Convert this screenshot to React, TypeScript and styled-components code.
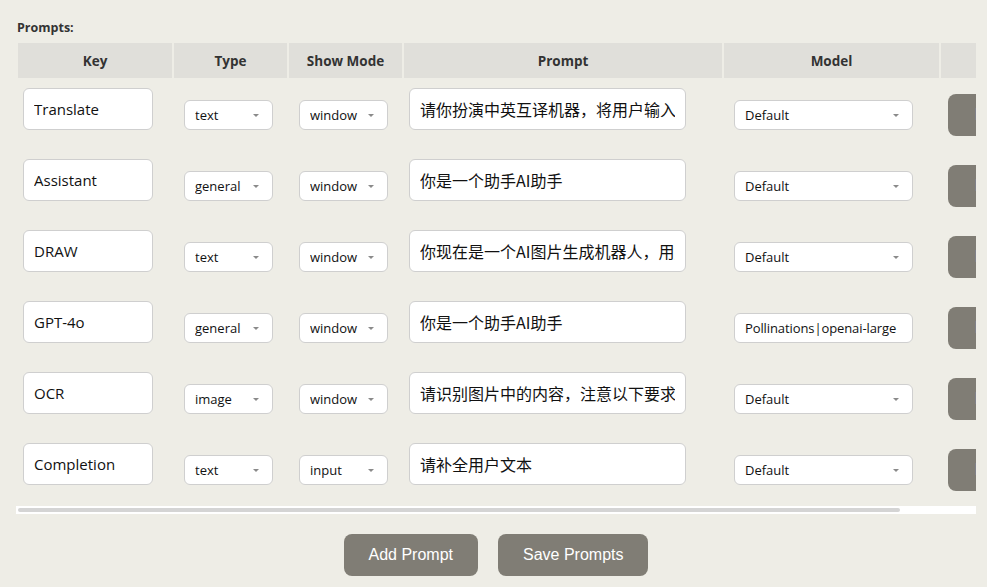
import React from "react";
import styled, { createGlobalStyle } from "styled-components";

const GlobalStyle = createGlobalStyle`
  html, body {
    margin: 0;
    padding: 0;
    background: #eeede6;
  }
  body {
    font-family: "Open Sans", "Noto Sans", sans-serif;
    color: #222;
  }
`;

const VIEW_W = 960;
const TABLE_W = 1040;

const Page = styled.div`
  width: ${VIEW_W}px;
  padding: 19px 11px 0 16px;
`;

const Label = styled.div`
  font-family: "Open Sans", sans-serif;
  font-weight: 700;
  font-size: 12.5px;
  line-height: 18px;
  color: #333;
  margin: 0 0 4px 1px;
`;

const Scroller = styled.div`
  width: ${VIEW_W}px;
  overflow-x: auto;
  overflow-y: hidden;
  scrollbar-width: none;
  &::-webkit-scrollbar {
    display: none;
  }
`;

const ScrollTrack = styled.div`
  width: ${VIEW_W}px;
  height: 8px;
  box-sizing: border-box;
  padding: 2px;
  background: #ffffff;
`;

const ScrollThumb = styled.div`
  height: 4px;
  border-radius: 2px;
  background: #d4d4d4;
`;

const Table = styled.table`
  width: ${TABLE_W}px;
  table-layout: fixed;
  border-collapse: separate;
  border-spacing: 2px;
`;

const Th = styled.th<{ $w: number }>`
  width: ${(p) => p.$w}px;
  height: 35px;
  padding: 0;
  background: #e0dfda;
  font-family: "Open Sans", sans-serif;
  font-weight: 700;
  font-size: 13.5px;
  color: #333;
  text-align: center;
`;

const Td = styled.td`
  padding: 8px 5px;
  vertical-align: middle;
`;

const TextInput = styled.input<{ $w: number; $cjk?: boolean }>`
  display: block;
  box-sizing: border-box;
  width: ${(p) => p.$w}px;
  height: 42px;
  margin: 0 0 11px 0;
  padding: 0 10px;
  border: 1px solid #cfcfcf;
  border-radius: 6px;
  background: #fff;
  color: #111;
  font-family: ${(p) =>
    p.$cjk
      ? `"Noto Sans CJK SC", "Noto Sans", sans-serif`
      : `"Open Sans", "Noto Sans", sans-serif`};
  font-size: ${(p) => (p.$cjk ? 16 : 15)}px;
  outline: none;
`;

const SelectWrap = styled.div<{ $w: number }>`
  position: relative;
  width: ${(p) => p.$w}px;
  margin-left: 5px;
  &::after {
    content: "";
    position: absolute;
    right: 14px;
    top: 14px;
    border-left: 3px solid transparent;
    border-right: 3px solid transparent;
    border-top: 3px solid #8a8a8a;
    pointer-events: none;
  }
`;

const Select = styled.select`
  display: block;
  box-sizing: border-box;
  width: 100%;
  height: 30px;
  padding: 0 20px 0 10px;
  border: 1px solid #cfcfcf;
  border-radius: 6px;
  background: #fff;
  color: #111;
  font-family: "Open Sans", sans-serif;
  font-size: 13px;
  appearance: none;
  -webkit-appearance: none;
  outline: none;
`;

const ModelInput = styled.input`
  display: block;
  box-sizing: border-box;
  width: 179px;
  height: 30px;
  margin-left: 5px;
  padding: 0 10px;
  border: 1px solid #cfcfcf;
  border-radius: 6px;
  background: #fff;
  color: #111;
  font-family: "Open Sans", sans-serif;
  font-size: 13px;
  letter-spacing: -0.1px;
  outline: none;
`;

const Button = styled.button<{ $inRow?: boolean }>`
  display: block;
  box-sizing: border-box;
  height: 42px;
  padding: 0 25px 0 ${(p) => (p.$inRow ? 27 : 25)}px;
  margin-left: ${(p) => (p.$inRow ? 2 : 0)}px;
  border: none;
  border-radius: 8px;
  background: #807d75;
  color: #fff;
  font-family: "Liberation Sans", Arial, sans-serif;
  font-size: 16px;
  cursor: pointer;
`;

const Actions = styled.div`
  display: flex;
  justify-content: center;
  gap: 20px;
  margin-top: 20px;
`;

type Row = {
  key: string;
  type: string;
  mode: string;
  prompt: string;
  model: string;
  modelIsText?: boolean;
};

const rows: Row[] = [
  { key: "Translate", type: "text", mode: "window", prompt: "请你扮演中英互译机器，将用户输入的内容翻译", model: "Default" },
  { key: "Assistant", type: "general", mode: "window", prompt: "你是一个助手AI助手", model: "Default" },
  { key: "DRAW", type: "text", mode: "window", prompt: "你现在是一个AI图片生成机器人，用户输入", model: "Default" },
  { key: "GPT-4o", type: "general", mode: "window", prompt: "你是一个助手AI助手", model: "Pollinations|openai-large", modelIsText: true },
  { key: "OCR", type: "image", mode: "window", prompt: "请识别图片中的内容，注意以下要求", model: "Default" },
  { key: "Completion", type: "text", mode: "input", prompt: "请补全用户文本", model: "Default" },
];

const columns: [string, number][] = [
  ["Key", 154],
  ["Type", 113],
  ["Show Mode", 113],
  ["Prompt", 318],
  ["Model", 215],
  ["", 113],
];

export default function App() {
  const thumbWidth = Math.round((VIEW_W / TABLE_W) * (VIEW_W - 4));
  return (
    <>
      <GlobalStyle />
      <Page>
        <Label>Prompts:</Label>
        <Scroller>
          <Table>
            <thead>
              <tr>
                {columns.map(([name, w], i) => (
                  <Th key={i} $w={w}>
                    {name}
                  </Th>
                ))}
              </tr>
            </thead>
            <tbody>
              {rows.map((r, i) => (
                <tr key={i}>
                  <Td>
                    <TextInput $w={130} defaultValue={r.key} />
                  </Td>
                  <Td>
                    <SelectWrap $w={89}>
                      <Select defaultValue={r.type}>
                        <option value="text">text</option>
                        <option value="general">general</option>
                        <option value="image">image</option>
                      </Select>
                    </SelectWrap>
                  </Td>
                  <Td>
                    <SelectWrap $w={89}>
                      <Select defaultValue={r.mode}>
                        <option value="window">window</option>
                        <option value="input">input</option>
                      </Select>
                    </SelectWrap>
                  </Td>
                  <Td>
                    <TextInput $w={277} $cjk defaultValue={r.prompt} />
                  </Td>
                  <Td>
                    {r.modelIsText ? (
                      <ModelInput defaultValue={r.model} />
                    ) : (
                      <SelectWrap $w={179}>
                        <Select defaultValue={r.model}>
                          <option value="Default">Default</option>
                        </Select>
                      </SelectWrap>
                    )}
                  </Td>
                  <Td>
                    <Button $inRow>Delete</Button>
                  </Td>
                </tr>
              ))}
            </tbody>
          </Table>
        </Scroller>
        <ScrollTrack>
          <ScrollThumb style={{ width: thumbWidth }} />
        </ScrollTrack>
        <Actions>
          <Button>Add Prompt</Button>
          <Button>Save Prompts</Button>
        </Actions>
      </Page>
    </>
  );
}
